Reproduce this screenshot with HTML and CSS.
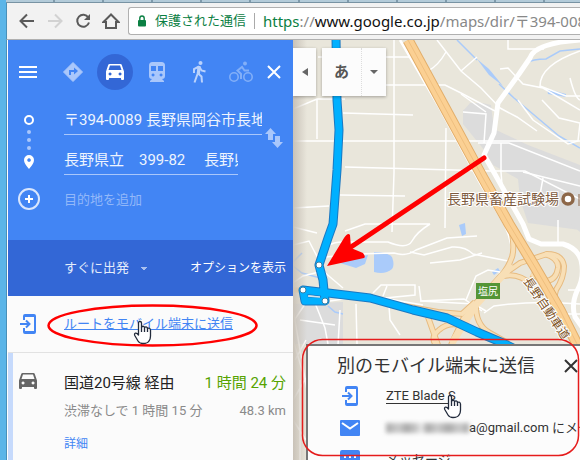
FILE: index.html
```html
<!DOCTYPE html>
<html lang="ja">
<head>
  <meta charset="UTF-8"/>
  <meta name="viewport" content="width=device-width, initial-scale=1.0"/>
  <title>ルート検索</title>
  <link rel="stylesheet" href="styles.css">
</head>
<body>

  <div class="tab-strip"></div>

  <!-- Browser toolbar -->
  <div class="toolbar">
    <button class="tool-btn" aria-label="戻る">
      <svg width="16" height="16" viewBox="0 0 16 16"><path d="M15 8H2M8 1.5L1.5 8 8 14.5" fill="none" stroke="#5a5a5a" stroke-width="2"/></svg>
    </button>
    <button class="tool-btn" aria-label="進む">
      <svg width="16" height="16" viewBox="0 0 16 16"><path d="M1 8h13M8 1.5L14.5 8 8 14.5" fill="none" stroke="#d2d2d2" stroke-width="2"/></svg>
    </button>
    <button class="tool-btn" aria-label="再読み込み">
      <svg width="16" height="16" viewBox="0 0 16 16"><path d="M13.3 4.5A6 6 0 1 0 14 9.5" fill="none" stroke="#5a5a5a" stroke-width="2"/><path d="M15 1v6H9z" fill="#5a5a5a"/></svg>
    </button>
    <button class="tool-btn" aria-label="ホーム">
      <svg width="18" height="16" viewBox="0 0 18 16"><path d="M9 1.5L1.5 9H4v6h10V9h2.5z" fill="none" stroke="#5a5a5a" stroke-width="2"/></svg>
    </button>
    <div class="address-bar">
      <svg width="10" height="12" viewBox="0 0 10 12"><rect x="1" y="5" width="8" height="6.5" rx="1" fill="#0b8043"/><path d="M2.8 5.5V3.2a2.2 2.2 0 0 1 4.4 0v2.3" fill="none" stroke="#0b8043" stroke-width="1.4"/></svg>
      <span class="secure">保護された通信</span>
      <span class="url"><span class="scheme">https</span>://<b>www.google.co.jp</b>/maps/dir/〒394-0089</span>
    </div>
  </div>

  <div class="page">

    <!-- Directions panel -->
    <div class="panel">
      <div class="search">
        <div class="modes">
          <button class="menu" aria-label="メニュー">
            <svg width="18" height="12" viewBox="0 0 18 12"><path d="M0 1h18M0 6h18M0 11h18" stroke="#fff" stroke-width="2"/></svg>
          </button>
          <button class="mode" aria-label="おすすめ">
            <svg width="22" height="22" viewBox="0 0 22 22"><path d="M11 1.5L20.5 11 11 20.5 1.5 11z" fill="#a9c7fb" stroke="#a9c7fb" stroke-linejoin="round"/><path d="M8 14V10h5" fill="none" stroke="#4285f4" stroke-width="2"/><path d="M12 6.5l4 3.5-4 3.5z" fill="#4285f4"/></svg>
          </button>
          <button class="mode active" aria-label="車">
            <svg width="18" height="16" viewBox="0 0 18 16"><path fill-rule="evenodd" fill="#fff" d="M3.5 0h11q1 0 1.3 1L18 7.5V15q0 1-1 1h-1q-1 0-1-1v-1H3v1q0 1-1 1H1q-1 0-1-1V7.5L2.2 1Q2.500 0 3.5 0zM4 1.5L2.5 6h13L14 1.5zM4 8.5a1.5 1.5 0 1 0 .1 0zM14 8.5a1.5 1.5 0 1 0 .1 0z"/></svg>
          </button>
          <button class="mode" aria-label="電車">
            <svg width="16" height="20" viewBox="0 0 16 20"><path fill-rule="evenodd" fill="#a9c7fb" d="M3.5 0h9Q16 0 16 3.5V14q0 3-3 3l2 2v1H1v-1l2-2q-3 0-3-3V3.5Q0 0 3.5 0zM2 4v5h5V4zM9 4v5h5V4zM4 11.5a1.5 1.5 0 1 0 .1 0zM12 11.5a1.5 1.5 0 1 0 .1 0z"/></svg>
          </button>
          <button class="mode" aria-label="徒歩">
            <svg width="14" height="22" viewBox="0 0 14 22"><circle cx="8.5" cy="2" r="2" fill="#bad2fc"/><path d="M7 5.5L5.5 13l-3 8.5M7 5.5L2 8v4M7.5 6l2 3.5 4 1M6 12.5l3.5 3 .5 6" fill="none" stroke="#bad2fc" stroke-width="2"/><path d="M5.5 5h3l-.5 8.5-3-.5z" fill="#bad2fc"/></svg>
          </button>
          <button class="mode" aria-label="自転車">
            <svg width="24" height="22" viewBox="0 0 24 22"><g fill="none" stroke="#82aff8" stroke-width="1.6"><circle cx="5" cy="16" r="4.2"/><circle cx="19" cy="16" r="4.2"/><path d="M12 18v-5L8.5 9.5 13 6l2.5 3.5H20" stroke-width="2"/></g><circle cx="16" cy="2.5" r="2" fill="#82aff8"/></svg>
          </button>
          <button class="close" aria-label="閉じる">
            <svg width="14" height="14" viewBox="0 0 14 14"><path d="M1 1l12 12M13 1L1 13" stroke="#fff" stroke-width="2"/></svg>
          </button>
        </div>

        <div class="waypoints">
          <svg class="track" width="56" height="110" viewBox="0 0 56 110">
            <circle cx="21" cy="16" r="4" fill="none" stroke="#fff" stroke-width="2"/>
            <g fill="#a9c7fb"><circle cx="21" cy="28" r="2"/><circle cx="21" cy="36" r="2"/><circle cx="21" cy="44" r="2"/></g>
            <path fill-rule="evenodd" fill="#fff" d="M21 51a5 5 0 0 1 5 5q0 3.5-5 9-5-5.5-5-9a5 5 0 0 1 5-5zm0 3.2a1.8 1.8 0 1 0 .1 0z"/>
            <circle cx="21" cy="95" r="10" fill="none" stroke="#d9e6fd" stroke-width="2"/>
            <path d="M21 91v8M17 95h8" stroke="#fff" stroke-width="2"/>
          </svg>
          <div class="fields">
            <input class="place" type="text" aria-label="出発地" value="〒394-0089 長野県岡谷市長地">
            <input class="place short" type="text" aria-label="目的地" value="長野県立　399-82　 長野県">
            <button class="add-place">目的地を追加</button>
          </div>
          <button class="swap" aria-label="出発地と目的地を入れ替え">
            <svg width="18" height="20" viewBox="0 0 18 20"><path fill="#a9c7fb" d="M5.5 0L11 6H8v6H3V6H0zM12.5 20L7 14h3V8h5v6h3z"/></svg>
          </button>
        </div>
      </div>

      <div class="options">
        <select class="depart" aria-label="出発時刻">
          <option>すぐに出発</option>
          <option>出発時刻</option>
        </select>
        <button class="show-options">オプションを表示</button>
      </div>

      <div class="send">
        <svg class="row-icon" width="16" height="20" viewBox="0 0 16 20"><path fill="#4285f4" d="M5 0h9q2 0 2 2v16q0 2-2 2H5q-2 0-2-2v-4h2v3h9V3H5v3H3V2q0-2 2-2z"/><path d="M0 10h9M6 6.5L9.5 10 6 13.5" fill="none" stroke="#4285f4" stroke-width="2"/></svg>
        <a href="#send">ルートをモバイル端末に送信</a>
      </div>

      <div class="route">
        <svg class="row-icon" width="18" height="16" viewBox="0 0 18 16"><path fill-rule="evenodd" fill="#666" d="M3.5 0h11q1 0 1.3 1L18 7.5V15q0 1-1 1h-1q-1 0-1-1v-1H3v1q0 1-1 1H1q-1 0-1-1V7.5L2.2 1Q2.5 0 3.5 0zM4 1.5L2.5 6h13L14 1.5zM4 8.5a1.5 1.5 0 1 0 .1 0zM14 8.5a1.5 1.5 0 1 0 .1 0z"/></svg>
        <div class="route-info">
          <div class="route-line main"><span>国道20号線 経由</span><span class="time">1 時間 24 分</span></div>
          <div class="route-line sub"><span>渋滞なしで 1 時間 15 分</span><span>48.3 km</span></div>
          <a class="detail" href="#detail">詳細</a>
        </div>
      </div>
    </div>

    <!-- Map -->
    <div class="map">
      <svg class="map-canvas" viewBox="293 40 287 420" preserveAspectRatio="xMinYMin slice">
        <defs>
          <linearGradient id="edge"><stop offset="0" stop-color="#c9c2b8"/><stop offset="1" stop-color="#c9c2b8" stop-opacity="0"/></linearGradient>
        </defs>
        <rect x="293" y="40" width="287" height="420" fill="#e9e6db"/>

        <!-- built-up areas -->
        <g fill="#dcdcdc">
          <path d="M463 110l20-7 8 2 3 24 34 16 52 20v65l-52-7-8-24-2-20-25-14-8-14-22-27z"/>
          <path d="M464 110l6-7h10l6 7z"/>
          <path d="M293 304l50-2v42h-50z"/>
          <path d="M566 220h14v12z"/>
        </g>

        <!-- water -->
        <g fill="#aacbfa">
          <path d="M374 252q13 0 18 5 3 8 0 12-7 6-18 3z"/>
          <path d="M340 263l12-5 16-3-3 9-9 4z"/>
          <path d="M459 225l6-2 1 11-4 2z"/>
          <path d="M477 59l12 10 14 17-14-11z"/>
          <path d="M547 89l19 5v3l-18-3z"/>
          <path d="M492 272l6-4 2 3-6 4z"/>
        </g>
        <g fill="none" stroke="#aacbfa" stroke-width="1.5">
          <path d="M457 40l20 20M499 84l15 14 45 38 21 12"/>
          <path d="M526 63q7-4 20-4l14-8 20-2"/>
          <path d="M293 262l9-9M293 266l9 7 22 6M328 306l7 6 8 2"/>
        </g>

        <!-- minor roads -->
        <g fill="none" stroke="#fff" stroke-width="1.5">
          <path d="M394 40v133l-2 59M318 57h96M386 85h59l16 8 34 18"/>
          <path d="M293 109l24-10h28M317 99v40M293 141l287 0M343 113l70 2M345 167l145 4 35 0 55 28"/>
          <path d="M446 128l-1 100M340 195l65 1M293 208l36-2M437 40l24 31 20 17 19 20M461 71l16-14M500 108l17 9 20 14"/>
          <path d="M446 52q-8 14-18 19M508 40v9h36M500 69l8-1 15 16 20 4 37 22M580 51q-40 14-40 35l26 10q10 0 14 0"/>
          <path d="M463 112l23 2-2 29M486 112l-25-18M478 143l31 0 71 28M501 143v29l2 26M543 178l-3 17-17 8M523 172l57 14"/>
          <path d="M518 100l15 20 35 24 10-3 2-18M542 100l17 18 21 5M570 78q5 20 10 22"/>
          <path d="M345 231l20-7h65M430 224q-13 8-18 17t-24 1l-45 0q-10 0-15 4"/>
          <path d="M326 257l28-3 40-1q12 4 22-3l31-12 30-2M410 252l14 3 28-8q13-1 21 7l35 7M430 263l30-3 22-7"/>
          <path d="M293 245l16-4q5 10 9 17M293 227l24 6M293 283l10-7 20-5 20 17"/>
          <path d="M373 293l8-8h34v10l-40 4M387 286l-4 10M419 286l2 15 53 3 12 7M330 301l20-3 33 0 40 7"/>
          <path d="M340 310l-2 35M356 304l1 40M389 306l1 14 10 15M307 301l-14 21M315 303l10 25 3 16M300 320l35 5"/>
          <path d="M484 313l10-7q40-6 86-2M420 301l44-2 18 12M466 300l10-24 12-6 12 2"/>
          <path d="M558 220v25M568 290h12M563 314h17"/>
          <path d="M293 310l14 80M293 340l12 40M295 360l11-20M293 400l13-22M293 420l13 20M300 380v80"/>
        </g>

        <!-- trunk road -->
        <path d="M580 40q-45 3-50 18l-11 16-21 29-4 30-10 22 8 14 31 55 6 15 12 5h22q14 4 18 16 4 17-4 31-6 14-2 26l14 20" fill="none" stroke="#fff" stroke-width="5" stroke-linejoin="round"/>
        <path d="M400 40l38 65 42 78 25 42q9 20 7 36" fill="none" stroke="#fff" stroke-width="2.5"/>

        <!-- expressway and interchange -->
        <g fill="none" stroke="#e7bb80" stroke-width="6">
          <path d="M511 228q4 20 1 29t-10 18l-26 28-13 16-12 26"/>
          <path d="M474 306l26-29 20-14 27-9q15 0 17 12 0 12-8 24-4 12-2 24"/>
          <path d="M545 254q14 4 13 14-2 13-13 13l-14-7"/>
          <path d="M500 277q17-6 32 8"/>
          <path d="M476 303q-1 22 14 30l18 10"/>
          <path d="M436 345q-6-8 3-15 9-8 21-5M404 306l34 6 24 2 13-12M438 345l-10-28"/>
        </g>
        <g fill="none" stroke="#f8dfb6" stroke-width="4">
          <path d="M511 228q4 20 1 29t-10 18l-26 28-13 16-12 26"/>
          <path d="M474 306l26-29 20-14 27-9q15 0 17 12 0 12-8 24-4 12-2 24"/>
          <path d="M545 254q14 4 13 14-2 13-13 13l-14-7"/>
          <path d="M500 277q17-6 32 8"/>
          <path d="M476 303q-1 22 14 30l18 10"/>
          <path d="M436 345q-6-8 3-15 9-8 21-5M404 306l34 6 24 2 13-12M438 345l-10-28"/>
          <path d="M512 265l-36 40-24 38" stroke-width="7"/>
        </g>
        <path d="M408 40l37 68 38 70 26 46 26 43 25 43 20 40" fill="none" stroke="#e2ae6b" stroke-width="11"/>
        <path d="M408 40l37 68 38 70 26 46 26 43 25 43 20 40" fill="none" stroke="#fbd093" stroke-width="9"/>
        <path d="M408 40l37 68 38 70 26 46 26 43 25 43 20 40" fill="none" stroke="#efbf7f" stroke-width="1"/>
        <path d="M293 290h10" stroke="#fbd093" stroke-width="5"/>

        <rect x="293" y="40" width="14" height="420" fill="url(#edge)"/>

        <!-- driving route -->
        <g fill="none" stroke-linejoin="round">
          <path d="M336 38l1 62 2 30-2 40-4 54-5 14-9 27 4 15 2 21h-20l-2-11 67 8 43 12 34 8 30 14 26 11 14 7" stroke="#1a78c2" stroke-width="9"/>
          <path d="M336 38l1 62 2 30-2 40-4 54-5 14-9 27 4 15 2 21h-20l-2-11 67 8 43 12 34 8 30 14 26 11 14 7" stroke="#00b0ff" stroke-width="7"/>
          <path d="M308 296l12 1" stroke="#d5e4ea" stroke-width="1.5"/>
        </g>
        <g fill="#fff" stroke="#3c7fa5" stroke-width="1"><circle cx="319" cy="265" r="3"/><circle cx="303" cy="290" r="3"/><circle cx="325" cy="301" r="3"/></g>

        <!-- labels -->
        <text class="poi" x="447" y="204">長野県畜産試験場</text>
        <circle cx="568" cy="199" r="5" fill="#fff" stroke="#8d6748" stroke-width="3.5"/>
        <path d="M579 194v12" stroke="#8d6748"/>
        <text class="road-name" transform="translate(523 281) rotate(56)">長野自動車道</text>
        <rect x="476" y="283" width="24" height="16" fill="#549536"/>
        <text class="sign" x="478" y="295">塩尻</text>
      </svg>

      <div class="map-controls">
        <button class="collapse" aria-label="パネルを閉じる"><svg width="6" height="8" viewBox="0 0 6 8"><path d="M6 0v8L0 4z" fill="#666"/></svg></button>
        <div class="ime">
          <button class="ime-key">あ</button>
          <button class="ime-more" aria-label="入力方法"><svg width="8" height="4" viewBox="0 0 8 4"><path d="M0 0h8L4 4z" fill="#666"/></svg></button>
        </div>
      </div>

      <!-- Send dialog -->
      <div class="dialog">
        <div class="dialog-head">
          <span>別のモバイル端末に送信</span>
          <button class="dialog-close" aria-label="閉じる"><svg width="14" height="14" viewBox="0 0 14 14"><path d="M1 1l12 12M13 1L1 13" stroke="#333" stroke-width="2"/></svg></button>
        </div>
        <div class="target">
          <svg width="20" height="20" viewBox="-3 0 20 20"><path fill="#4285f4" d="M4 0h9q2 0 2 2v16q0 2-2 2H4q-2 0-2-2v-4h2v3h9V3H4v3H2V2q0-2 2-2z"/><path d="M-1 10h9M5 6.5L8.5 10 5 13.5" fill="none" stroke="#4285f4" stroke-width="2"/></svg>
          <a href="#device">ZTE Blade S</a>
        </div>
        <div class="target">
          <svg width="20" height="16" viewBox="0 0 20 16"><rect width="20" height="16" rx="1" fill="#4285f4"/><path d="M2 3l8 5.5L18 3" fill="none" stroke="#fff" stroke-width="2"/></svg>
          <span class="mail"><span class="masked"></span>a@gmail.com にメール</span>
        </div>
        <div class="target">
          <svg width="20" height="20" viewBox="0 0 20 20"><path d="M2 0h16q2 0 2 2v12q0 2-2 2H4l-4 4V2q0-2 2-2z" fill="#4285f4"/><path d="M4 7h2M9 7h2M14 7h2" stroke="#fff" stroke-width="2"/></svg>
          <span>メッセージ</span>
        </div>
      </div>
    </div>
  </div>

  <!-- Pointers and red marks -->
  <svg class="marks" width="580" height="460" viewBox="0 0 580 460">
    <defs>
      <g id="hand" stroke="#222b3c" stroke-width="1.3" stroke-linejoin="round">
        <path d="M4.5 13V2q0-1.5 1.5-1.5T7.5 2v4q1-1 2-.7t1 1.2q1.2-1 2-.5t1 1.5q1.2-.8 2-.2t1 1.7v6q0 3-1.5 5-1.5 2.5-6 2.5-3.5 0-5-2.5L.8 14.500q-.8-2 .7-2.3t3 1.8z" fill="#fff"/>
        <path d="M7.5 6v5M10.5 6.5V11M13.5 7.5V11" fill="none"/>
      </g>
    </defs>
    <g fill="none" stroke="#f00">
      <ellipse cx="152.5" cy="325.5" rx="104" ry="20" stroke-width="2.5"/>
      <rect x="302.5" y="339.5" width="276" height="116" rx="20" stroke="#e51c1c" stroke-width="1.5"/>
      <path d="M484 158L345 251" stroke-width="5" stroke-linecap="round"/>
    </g>
    <path d="M327 266l17-28q4-6 6-3l1 13 12 5q3 4 1 5z" fill="#f00"/>
    <use href="#hand" x="134" y="321"/>
    <use href="#hand" x="444" y="395"/>
  </svg>

</body>
</html>
```
FILE: styles.css
```css
* { box-sizing: border-box; }
body {
  margin: 0;
  min-height: 100vh;
  display: flex;
  flex-direction: column;
  position: relative;
  overflow: hidden;
  font-family: Roboto, "Noto Sans CJK JP", sans-serif;
  font-size: 13px;
  line-height: 20px;
  color: #333;
  background: #fff;
  border-left: 6px solid #5bb5e8;
}
button, input, select { font: inherit; border: 0; padding: 0; margin: 0; background: none; color: inherit; }
button { display: flex; align-items: center; justify-content: center; cursor: pointer; }
svg { display: block; flex-shrink: 0; }

.tab-strip {
  height: 3px;
  background: repeating-linear-gradient(90deg, #b3cbd9 0 47px, #7f9aab 47px 49px);
  border-bottom: 1px solid #7893a3;
}
.toolbar {
  height: 37px;
  display: flex;
  align-items: center;
  padding-left: 6px;
  background: #f2f2f2;
  border-left: 1px solid #4a90b8;
  border-bottom: 1px solid #b0b0b0;
}
.tool-btn { width: 28px; height: 28px; flex-shrink: 0; }
.address-bar {
  flex: 1;
  min-width: 0;
  height: 28px;
  margin-left: 3px;
  padding-left: 8px;
  display: flex;
  align-items: center;
  background: #fff;
  border: 1px solid #b0b0b0;
  border-right: 0;
  border-radius: 3px 0 0 3px;
  white-space: nowrap;
  overflow: hidden;
}
.secure {
  margin-left: 8px;
  padding-right: 8px;
  color: #0b8043;
  border-right: 1px solid #aaa;
  line-height: 16px;
}
.url { margin-left: 8px; font-family: "Noto Sans", "Noto Sans CJK JP", sans-serif; font-size: 15px; color: #888; }
.url b { font-weight: normal; color: #111; }
.scheme { color: #0b8043; }

.page { flex: 1; display: flex; border-left: 1px solid #4a90b8; padding-left: 1px; }

.panel { width: 285px; flex-shrink: 0; background: #fbfbfb; }
.search { background: #4285f4; color: #fff; padding-bottom: 24px; }
.modes { display: flex; align-items: center; height: 64px; padding-right: 7px; }
.menu { width: 40px; height: 40px; margin-right: 4px; }
.mode { width: 36px; height: 36px; margin: 0 3px; border-radius: 50%; }
.mode.active { background: #3367d6; }
.close { width: 24px; height: 40px; }

.waypoints { display: flex; }
.fields { width: 198px; }
.place {
  display: block;
  width: 198px;
  height: 31px;
  margin-bottom: 9px;
  padding-bottom: 2px;
  font-size: 15px;
  color: #eef4fe;
  border-bottom: 1px solid #a9c7fb;
}
.place.short { width: 174px; }
.add-place { height: 32px; color: #92b8f9; }
.swap { width: 20px; height: 68px; margin-left: 2px; }

.options {
  height: 56px;
  padding: 0 7px 0 56px;
  display: flex;
  align-items: center;
  justify-content: space-between;
  background: #3367d6;
  color: #e4ecfb;
}
.depart {
  appearance: none;
  width: 84px;
  height: 24px;
  /* two halves of the caret */
  background:
    linear-gradient(to bottom left, #a9c0ef 50%, transparent 50%) 76px 11px / 4px 4px no-repeat,
    linear-gradient(to bottom right, #a9c0ef 50%, transparent 50%) 80px 11px / 4px 4px no-repeat;
}
.show-options { font-size: 12px; color: #fff; }

.send { height: 57px; display: flex; align-items: center; border-bottom: 1px solid #e2e2e2; }
.send a, .detail { color: #4285f4; }
.row-icon { width: 40px; margin-right: 16px; }

.route {
  display: flex;
  align-items: flex-start;
  padding: 20px 7px 6px 0;
  border-left: 5px solid #c6dafc;
}
.route .row-icon { width: 30px; margin-right: 21px; }
.route-info { flex: 1; }
.route-line { display: flex; justify-content: space-between; white-space: nowrap; margin-bottom: 8px; }
.main { font-size: 15px; color: #222; }
.time { color: #56a300; }
.sub { color: #8a8a8a; margin-bottom: 13px; }
.detail { display: block; font-size: 12px; text-decoration: none; }

.map { flex: 1; min-width: 0; position: relative; overflow: hidden; background: #e9e6db; }
.map-canvas { position: absolute; width: 100%; height: 100%; }
.poi, .road-name, .sign { font-family: "Noto Sans CJK JP", sans-serif; }
.poi { font-size: 14px; fill: #7d5a3e; stroke: #fff; stroke-width: 2px; paint-order: stroke; }
.road-name { font-size: 12px; fill: #7d5223; stroke: #fff; stroke-width: 2px; paint-order: stroke; }
.sign { font-size: 10px; fill: #fff; }

.map-controls { position: relative; display: flex; gap: 6px; padding-top: 8px; }
.collapse, .ime { height: 48px; background: #fcfcfc; box-shadow: 0 1px 3px rgba(0,0,0,0.3); }
.collapse { width: 23px; }
.ime { display: flex; width: 64px; }
.ime-key { width: 40px; height: 48px; font-size: 15px; font-weight: bold; color: #555; border-right: 1px dotted #ddd; }
.ime-more { flex: 1; height: 48px; }

.dialog {
  position: absolute;
  top: 304px;
  left: 13px;
  right: 0;
  bottom: 0;
  overflow: hidden;
  padding: 8px 0 0 32px;
  background: #fcfcfc;
  border-top: 2px solid #777;
  border-left: 2px solid #777;
}
.dialog-head {
  display: flex;
  align-items: center;
  justify-content: space-between;
  height: 24px;
  padding-right: 2px;
  margin: 0 0 2px -3px;
  font-size: 18px;
  line-height: 24px;
  color: #333;
}
.target { display: flex; align-items: center; gap: 26px; height: 32px; white-space: nowrap; }
.target a { color: #333; text-decoration: underline; text-underline-offset: 3px; }
.mail { display: flex; align-items: center; }
.masked {
  width: 83px;
  height: 10px;
  background: linear-gradient(90deg, #aaa, #ccc 15%, #aaa 25%, #ccc 38%, #eee 42%, #aaa 50%, #ccc 62%, #aaa 75%, #ccc 88%, #aaa);
  filter: blur(2px);
}

.marks { position: absolute; top: 0; left: -6px; pointer-events: none; }
```
